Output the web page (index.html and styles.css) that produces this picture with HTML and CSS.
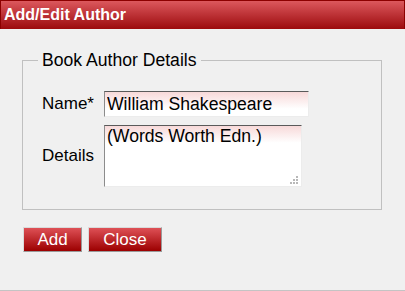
FILE: index.html
```html
<!DOCTYPE html>
<html lang="en">
<head>
<meta charset="UTF-8">
<title>Add/Edit Author</title>
<link rel="stylesheet" href="styles.css">
</head>
<body>
<div class="dialog">
    <div class="dialog-title">Add/Edit Author</div>
    <div class="dialog-body">
        <fieldset class="details">
            <legend>Book Author Details</legend>
            <div class="field">
                <label for="name">Name*</label>
                <input type="text" id="name" value="William Shakespeare">
            </div>
            <div class="field">
                <label for="details">Details</label>
                <span class="area-wrap">
                    <textarea id="details">(Words Worth Edn.)</textarea>
                    <svg class="grip" width="8" height="8" viewBox="0 0 8 8">
                        <rect x="6" y="0" width="2" height="2" fill="#b8b8b8"/>
                        <rect x="3" y="3" width="2" height="2" fill="#b8b8b8"/>
                        <rect x="6" y="3" width="2" height="2" fill="#b8b8b8"/>
                        <rect x="0" y="6" width="2" height="2" fill="#b8b8b8"/>
                        <rect x="3" y="6" width="2" height="2" fill="#b8b8b8"/>
                        <rect x="6" y="6" width="2" height="2" fill="#b8b8b8"/>
                    </svg>
                </span>
            </div>
        </fieldset>
        <div class="buttons">
            <button type="button" class="btn btn-add">Add</button>
            <button type="button" class="btn btn-close">Close</button>
        </div>
    </div>
</div>
</body>
</html>
```

FILE: styles.css
```css
body {
    margin: 0;
    background-color: #f0f0f0;
    font-family: "Liberation Sans", Arial, sans-serif;
}
.dialog {
    height: 291px;
    box-sizing: border-box;
    border-bottom: 1px solid #c4c4c4;
}
.dialog-title {
    height: 29px;
    box-sizing: border-box;
    border: 1px solid #8c0000;
    border-bottom: none;
    background: linear-gradient(#dc585d, #9c0a0d);
    color: #fff;
    font-weight: bold;
    font-size: 16px;
    line-height: 27px;
    padding-left: 3px;
}
.dialog-body {
    padding: 21px 0 0 22px;
}
.details {
    margin: 0;
    width: 360px;
    box-sizing: border-box;
    border: 1px solid #c0c0c0;
    padding: 20px 0 22px 19px;
}
.details legend {
    padding: 0 4px;
    margin-left: -4px;
    font-size: 17.6px;
    color: #000;
}
.field {
    display: flex;
    align-items: center;
}
.field + .field {
    margin-top: 8px;
}
.field label {
    width: 62px;
    font-size: 17px;
    color: #000;
}
.field input,
.field textarea {
    box-sizing: border-box;
    margin: 0;
    border: 1px solid;
    border-color: #5a5a5a #ececec #ececec #8c8c8c;
    font-family: "Liberation Sans", Arial, sans-serif;
    font-size: 17.6px;
    color: #000;
    outline: none;
}
.field input {
    width: 205px;
    height: 26px;
    padding: 0 2px;
    background: linear-gradient(#f7d9d9, #fff 70%);
}
.area-wrap {
    position: relative;
    display: block;
    height: 62px;
}
.field textarea {
    display: block;
    width: 198px;
    height: 62px;
    padding: 0 2px;
    resize: none;
    overflow: hidden;
    background: linear-gradient(#f7d9d9, #fff 28%);
}
.grip {
    position: absolute;
    right: 4px;
    bottom: 3px;
}
.buttons {
    display: flex;
    gap: 6px;
    margin: 17px 0 0 1px;
}
.btn {
    height: 25px;
    padding: 0;
    border: 1px solid;
    border-color: #dadada #9a9a9a #9a9a9a #dadada;
    background: linear-gradient(#de5056, #9c0000);
    color: #fff;
    font-family: "Liberation Sans", Arial, sans-serif;
    font-size: 17px;
    cursor: pointer;
}
.btn-add {
    width: 59px;
}
.btn-close {
    width: 74px;
}
```
